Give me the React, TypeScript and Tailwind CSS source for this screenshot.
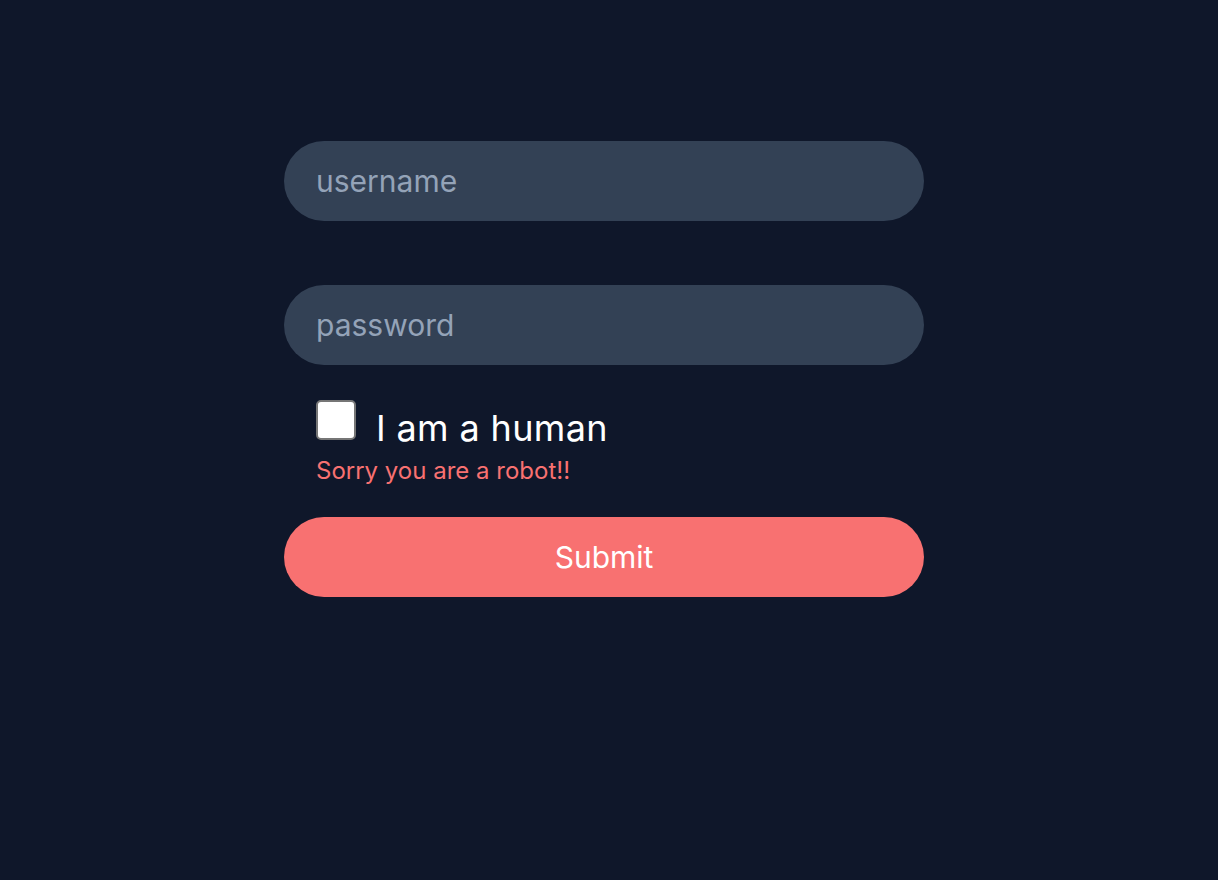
import { useState } from "react";

export default function App() {
  const [human, setHuman] = useState(false);
  return (
    <div className="min-h-[880px] w-full bg-[#0f172a] pr-2.5 font-['Inter',sans-serif]">
      <form
        onSubmit={(e) => e.preventDefault()}
        className="w-[640px] mx-auto pt-[141px] flex flex-col"
      >
        <input
          type="text"
          name="username"
          placeholder="username"
          className="h-20 w-full rounded-full bg-[#334155] px-8 text-3xl text-white placeholder:text-[#94a3b8] outline-none"
        />
        <input
          type="password"
          name="password"
          placeholder="password"
          className="mt-16 h-20 w-full rounded-full bg-[#334155] px-8 text-3xl text-white placeholder:text-[#94a3b8] outline-none"
        />
        <div className="mt-[35px] px-8">
          <label className="flex items-start gap-5">
            <input
              type="checkbox"
              checked={human}
              onChange={(e) => setHuman(e.target.checked)}
              className="appearance-none w-10 h-10 shrink-0 rounded-[5px] border-2 border-[#767676] bg-white checked:bg-[#0075ff] checked:border-[#0075ff]"
            />
            <span className="mt-2 text-4xl leading-10 tracking-[0.01em] text-white">I am a human</span>
          </label>
          {!human && (
            <p className="mt-[7px] text-2xl leading-8 text-[#f87171]">
              Sorry you are a robot!!
            </p>
          )}
        </div>
        <button
          type="submit"
          className="mt-[30px] h-20 w-full rounded-full bg-[#f87171] text-3xl text-white"
        >
          Submit
        </button>
      </form>
    </div>
  );
}
